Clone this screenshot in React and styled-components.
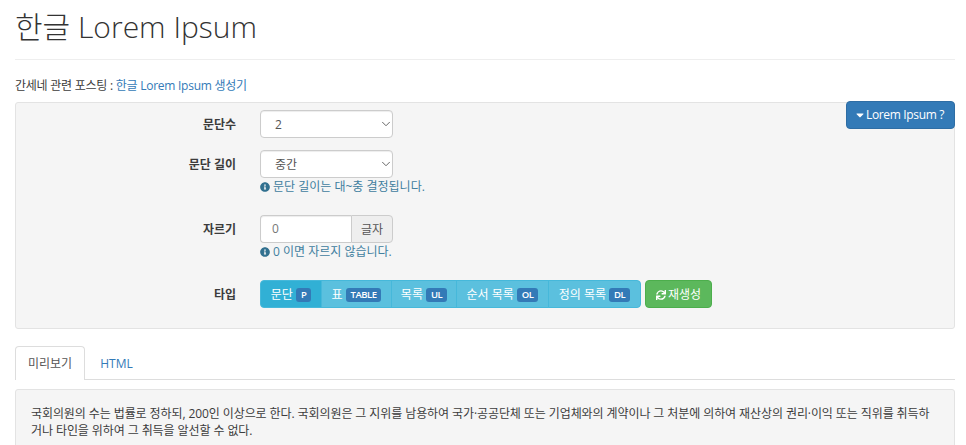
import React from 'react'
import styled, { createGlobalStyle } from 'styled-components'
import { FaInfoCircle, FaSync, FaCaretDown } from 'react-icons/fa'
import { ChevronDown } from 'lucide-react'

const GlobalStyle = createGlobalStyle`
  html, body {
    margin: 0;
    height: 445px;
    overflow: hidden;
    background: #fff;
  }
  * { box-sizing: border-box; }
  body {
    font-family: "Open Sans", "Noto Sans CJK KR", sans-serif;
    font-size: 12px;
    line-height: 1.42857;
    color: #3c3c3c;
  }
`

const Container = styled.div`
  padding: 0 11px 0 15px;
  width: 966px;
`

const PageHeader = styled.header`
  height: 60px;
  border-bottom: 1px solid #eee;
  padding-top: 7px;
`

const Title = styled.h1`
  margin: 0;
  font-size: 30px;
  font-weight: 300;
  line-height: 40px;
  color: #333;
`

const Posting = styled.p`
  margin: 17px 0 0;
  height: 25px;
  line-height: 17px;
  letter-spacing: -0.25px;
`

const Link = styled.a`
  color: #337ab7;
  text-decoration: none;
`

const Well = styled.section`
  position: relative;
  height: 227px;
  background: #f5f5f5;
  border: 1px solid #e3e3e3;
  border-radius: 3px;
  padding-top: 7px;
`

const ToggleButton = styled.button`
  position: absolute;
  top: -2px;
  right: -1px;
  display: flex;
  align-items: center;
  gap: 3px;
  height: 28px;
  padding: 0 10px;
  background: #337ab7;
  color: #fff;
  border: 1px solid #2e6da4;
  border-radius: 4px;
  font: inherit;
  letter-spacing: -0.35px;

  svg { margin: 0 -3px; }
`

const Row = styled.div`
  display: grid;
  grid-template-columns: 220px 1fr;
  column-gap: 24px;
  margin-bottom: ${p => p.$gap}px;
`

const Label = styled.label`
  height: 28px;
  font-weight: 700;
  text-align: right;
  line-height: 30px;
`

const SelectWrap = styled.div`
  position: relative;
  width: 133px;
  height: 28px;

  svg {
    position: absolute;
    right: 0;
    top: 7px;
    color: #666;
    pointer-events: none;
  }
`

const Select = styled.select`
  appearance: none;
  width: 100%;
  height: 100%;
  padding: 1px 0 0 14px;
  background: #fff;
  border: 1px solid #ccc;
  border-radius: 4px;
  box-shadow: inset 0 1px 1px rgba(0, 0, 0, 0.075);
  font: inherit;
  color: #555;
`

const InputGroup = styled.div`
  display: flex;
  width: 133px;
  height: 28px;
`

const Input = styled.input`
  width: 91px;
  padding: 0 11px;
  background: #fff;
  border: 1px solid #ccc;
  border-right: 0;
  border-radius: 4px 0 0 4px;
  box-shadow: inset 0 1px 1px rgba(0, 0, 0, 0.075);
  font: inherit;
  color: #777;
`

const Addon = styled.span`
  flex: 1;
  text-align: center;
  line-height: 27px;
  background: #eee;
  border: 1px solid #ccc;
  border-radius: 0 4px 4px 0;
  color: #555;
`

const Help = styled.div`
  display: flex;
  align-items: center;
  gap: 3px;
  height: 17px;
  color: #41809f;

  svg { color: #31708f; }
`

const Buttons = styled.div`
  display: flex;
  gap: 4px;
`

const ButtonGroup = styled.div`
  display: flex;
`

const TypeButton = styled.button`
  display: flex;
  align-items: center;
  justify-content: center;
  gap: 3px;
  width: ${p => p.$width}px;
  height: 28px;
  padding: 1px 0 0;
  margin-left: -1px;
  background: ${p => (p.$active ? '#31b0d5' : '#5bc0de')};
  border: 1px solid #46b8da;
  color: #fff;
  font: inherit;

  &:first-child {
    margin-left: 0;
    border-radius: 4px 0 0 4px;
  }
  &:last-child { border-radius: 0 4px 4px 0; }
`

const Badge = styled.span`
  padding: 0 5px;
  height: 14px;
  line-height: 14px;
  background: #337ab7;
  border-radius: 3px;
  font-size: 9.5px;
  font-weight: 600;
  letter-spacing: -0.5px;
`

const RegenButton = styled.button`
  display: flex;
  align-items: center;
  gap: 2px;
  height: 28px;
  padding: 1px 10px 0;
  background: #5cb85c;
  border: 1px solid #4cae4c;
  border-radius: 4px;
  color: #fff;
  font: inherit;
`

const Tabs = styled.nav`
  display: flex;
  gap: 2px;
  height: 34px;
  margin-top: 17px;
  border-bottom: 1px solid #ddd;
`

const Tab = styled.a`
  height: ${p => (p.$active ? '34px' : '33px')};
  padding: 0 12px;
  line-height: 34px;
  color: ${p => (p.$active ? '#555' : '#337ab7')};
  background: #fff;
  border: 1px solid ${p => (p.$active ? '#ddd' : 'transparent')};
  border-bottom: 0;
  border-radius: 4px 4px 0 0;
`

const Preview = styled.section`
  margin-top: 9px;
  height: 80px;
  padding: 15px;
  background: #f5f5f5;
  border: 1px solid #e3e3e3;
  border-radius: 3px;
  line-height: 17px;
  letter-spacing: -0.09px;
`

const types = [
  { name: '문단', tag: 'P', width: 62, active: true },
  { name: '표', tag: 'TABLE', width: 71 },
  { name: '목록', tag: 'UL', width: 66 },
  { name: '순서 목록', tag: 'OL', width: 93 },
  { name: '정의 목록', tag: 'DL', width: 93 },
]

export default function App() {
  return (
    <Container>
      <GlobalStyle />
      <PageHeader>
        <Title>한글 Lorem Ipsum</Title>
      </PageHeader>
      <Posting>
        간세네 관련 포스팅 : <Link>한글 Lorem Ipsum 생성기</Link>
      </Posting>
      <Well>
        <ToggleButton>
          <FaCaretDown size={12} /> Lorem Ipsum ?
        </ToggleButton>
        <Row $gap={12}>
          <Label>문단수</Label>
          <SelectWrap>
            <Select defaultValue="2">
              <option>1</option>
              <option>2</option>
            </Select>
            <ChevronDown size={14} strokeWidth={1.7} />
          </SelectWrap>
        </Row>
        <Row $gap={20}>
          <Label>문단 길이</Label>
          <div>
            <SelectWrap>
              <Select defaultValue="중간">
                <option>중간</option>
              </Select>
              <ChevronDown size={14} strokeWidth={1.7} />
            </SelectWrap>
            <Help>
              <FaInfoCircle size={10} /> 문단 길이는 대~충 결정됩니다.
            </Help>
          </div>
        </Row>
        <Row $gap={20}>
          <Label>자르기</Label>
          <div>
            <InputGroup>
              <Input defaultValue="0" />
              <Addon>글자</Addon>
            </InputGroup>
            <Help>
              <FaInfoCircle size={10} /> 0 이면 자르지 않습니다.
            </Help>
          </div>
        </Row>
        <Row $gap={0}>
          <Label>타입</Label>
          <Buttons>
            <ButtonGroup>
              {types.map(t => (
                <TypeButton key={t.tag} $active={t.active} $width={t.width}>
                  {t.name} <Badge>{t.tag}</Badge>
                </TypeButton>
              ))}
            </ButtonGroup>
            <RegenButton>
              <FaSync size={10} /> 재생성
            </RegenButton>
          </Buttons>
        </Row>
      </Well>
      <Tabs>
        <Tab $active>미리보기</Tab>
        <Tab>HTML</Tab>
      </Tabs>
      <Preview>
        국회의원의 수는 법률로 정하되, 200인 이상으로 한다. 국회의원은 그 지위를 남용하여 국가·공공단체 또는 기업체와의 계약이나 그 처분에 의하여 재산상의 권리·이익 또는 직위를 취득하거나 타인을 위하여 그 취득을 알선할 수 없다.
      </Preview>
    </Container>
  )
}
